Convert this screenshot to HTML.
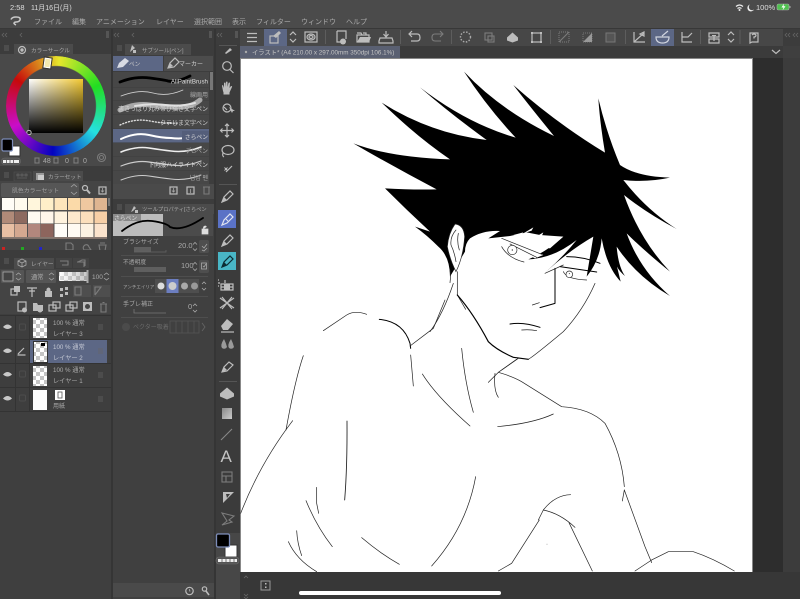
<!DOCTYPE html>
<html><head><meta charset="utf-8"><style>
html,body{margin:0;padding:0;width:800px;height:599px;overflow:hidden;background:#3f3f3f}
svg{position:absolute;left:0;top:0}
#ring{position:absolute;left:6px;top:56px;width:100px;height:100px;border-radius:50%;background:conic-gradient(from -56deg,#f00,#ff0,#0f0,#0ff,#00f,#f0f,#f00);-webkit-mask:radial-gradient(circle,transparent 39.5px,#000 40.5px);mask:radial-gradient(circle,transparent 39.5px,#000 40.5px);filter:saturate(.8) brightness(.92)}
#mk{position:absolute;left:44px;top:58px;width:5px;height:8px;background:#f3e9b0;border:1px solid #fff;outline:1px solid #333;transform:rotate(8deg)}
text{font-family:"Liberation Sans","Noto Sans CJK JP",sans-serif;fill:#aaa;font-size:6px}
.i{fill:none;stroke:#bdbdbd;stroke-width:1.2}
.a{fill:none;stroke:#a8a8a8;stroke-width:.8}
.d{fill:none;stroke:#7c7c7c;stroke-width:1.1}
.f{fill:#bdbdbd}
.l{fill:none;stroke:#000;stroke-width:3;stroke-linecap:round;stroke-linejoin:round}
.t{fill:none;stroke:#222;stroke-width:2.1;stroke-linecap:round;stroke-linejoin:round}
.b{fill:none;stroke-linecap:round}
</style></head><body>
<svg width="800" height="599" viewBox="0 0 800 599" xmlns="http://www.w3.org/2000/svg">
<defs>
<linearGradient id="sx" x1="0" x2="1" y1="0" y2="0"><stop offset="0" stop-color="#fff"/><stop offset="1" stop-color="#f2c832"/></linearGradient>
<linearGradient id="sy" x1="0" x2="0" y1="0" y2="1"><stop offset="0" stop-color="#000" stop-opacity="0"/><stop offset="1" stop-color="#000"/></linearGradient>
<linearGradient id="gr" x1="0" x2="1" y1="0" y2="1"><stop offset="0" stop-color="#888"/><stop offset="1" stop-color="#ccc"/></linearGradient>
<pattern id="ck" width="8" height="8" patternUnits="userSpaceOnUse"><rect width="8" height="8" fill="#fff"/><rect width="4" height="4" fill="#c4c4c4"/><rect x="4" y="4" width="4" height="4" fill="#c4c4c4"/></pattern>
<linearGradient id="op" x1="0" x2="1" y1="0" y2="0"><stop offset="0" stop-color="#fff"/><stop offset="1" stop-color="#777"/></linearGradient>
</defs>

<!-- base -->
<rect width="800" height="599" fill="#3f3f3f"/>
<rect width="800" height="28" fill="#4b4b4b"/>
<rect y="28" width="800" height="1" fill="#383838"/>

<!-- status -->
<text x="10" y="10" style="font-size:7.5px;fill:#ddd">2:58</text>
<text x="31" y="10" style="font-size:7px;fill:#ddd">11月16日(月)</text>
<path d="M736 6.500q3.500-3 7 0M737.500 8.500q2-1.500 4 0" fill="none" stroke="#eee" stroke-width="1.200"/><circle cx="739.500" cy="10" r="1" fill="#eee"/>
<path d="M750 4.500a3.500 3.500 0 1 0 4 5a3.200 3.200 0 0 1-4-5z" fill="#eee"/>
<text x="756" y="10" style="font-size:7.500px;fill:#ddd">100%</text>
<rect x="777" y="4" width="12" height="6" rx="1.500" fill="#4fc24f" stroke="#aaa" stroke-width=".6"/><rect x="789.500" y="6" width="1" height="2" fill="#aaa"/><path d="M784 3.500l-2.500 4h2l-1 3l3-4.200h-2z" fill="#fff"/>

<!-- menu -->
<path d="M11 19.500q1-2.500 5-2.500q5 0 4 3q-1 2-4 2q-2 0-2 1.500q1 1 2 1.500" fill="none" stroke="#c8c8c8" stroke-width="1.500"/>
<text x="34" y="24" style="font-size:7px">ファイル</text><text x="72" y="24" style="font-size:7px">編集</text><text x="96" y="24" style="font-size:7px">アニメーション</text><text x="156" y="24" style="font-size:7px">レイヤー</text><text x="194" y="24" style="font-size:7px">選択範囲</text><text x="232" y="24" style="font-size:7px">表示</text><text x="256" y="24" style="font-size:7px">フィルター</text><text x="301" y="24" style="font-size:7px">ウィンドウ</text><text x="346" y="24" style="font-size:7px">ヘルプ</text>

<!-- panel separators & strips -->
<rect x="0" y="29" width="240" height="15" fill="#3c3c3c"/>
<rect x="111" y="29" width="2" height="570" fill="#353535"/>
<rect x="214" y="29" width="2" height="570" fill="#353535"/>
<rect x="106" y="31" width="3" height="7" fill="#555"/><rect x="209" y="31" width="3" height="7" fill="#555"/><rect x="235" y="31" width="3" height="7" fill="#555"/>
<path d="M4 33l-2 2 2 2M7 33l-2 2 2 2M22 33l-2 2 2 2M116 33l-2 2 2 2M119 33l-2 2 2 2M134 33l-2 2 2 2M219 33l-2 2 2 2M222 33l-2 2 2 2" fill="none" stroke="#666" stroke-width=".8"/>

<!-- toolbar -->
<rect x="240" y="29" width="543" height="17" fill="#474747"/>
<rect x="783" y="29" width="17" height="17" fill="#3c3c3c"/>
<path d="M787 33l-2 2 2 2M790 33l-2 2 2 2M795 33l-2 2 2 2M798 33l-2 2 2 2" fill="none" stroke="#666" stroke-width=".8"/>
<rect x="264" y="29" width="23" height="17" fill="#5c6785"/>
<rect x="651" y="29" width="23" height="17" fill="#5c6785"/>
<path d="M325.500 30v14M400.500 30v14M451.500 30v14M550.500 30v14M625.500 30v14M700.500 30v14M740 30v14" stroke="#5d5d5d" stroke-width="1"/>
<path d="M247 33.500h10M247 37.500h10M247 41.500h10" class="i"/>
<rect x="270" y="36" width="8" height="7" class="i"/><path d="M273 36l6-5 2 2-5 5z" class="f"/>
<path d="M290 35l3-3 3 3M290 39l3 3 3-3" class="i"/>
<rect x="305" y="32" width="12" height="10" class="i"/><ellipse cx="311" cy="37" rx="4" ry="3" class="i"/><ellipse cx="311" cy="37" rx="2" ry="1.500" class="i"/>
<path d="M337 31h9v8M337 31v11h4" class="i"/><circle cx="343" cy="41.500" r="3" class="f"/>
<path d="M357 35h12v7h-12zM357 33h4l1 2M363 33h3v2" class="i"/><path d="M357 42l3-5h11l-2 5z" class="f"/>
<path d="M386 31v6M383.500 34l2.500 3 2.500-3M380 38h12l1 3v2h-14v-2z" class="i"/>
<path d="M409 34h8q3 0 3 3.500t-3 3.500h-6M412 31l-3 3 3 3" class="i"/>
<path d="M443 34h-8q-3 0-3 3.500t3 3.500h6M440 31l3 3-3 3" class="d"/>
<circle cx="465.500" cy="37" r="5" fill="none" stroke="#aaa" stroke-width="1.400" stroke-dasharray="1.500 1.500"/>
<rect x="485" y="33" width="7" height="7" class="d"/><rect x="488" y="36" width="6" height="6" class="d"/>
<path d="M507 37.500l5.500-5 5.500 5v3l-5.500 2-5.500-2z" class="f"/>
<rect x="532" y="33" width="9" height="9" class="i"/><path d="M531 32h2v2h-2zM540 32h2v2h-2zM531 41h2v2h-2zM540 41h2v2h-2z" class="f"/>
<rect x="559" y="32" width="10" height="10" fill="none" stroke="#7c7c7c" stroke-dasharray="1 1"/><path d="M559 42l10-10" class="d"/>
<rect x="583" y="33" width="9" height="9" fill="none" stroke="#777" stroke-dasharray="1 1"/><path d="M583 42l9-9v9z" fill="#999"/>
<rect x="606" y="33" width="9" height="9" fill="#555" stroke="#777"/>
<path d="M634 32v10h11M634 42l10-9M640 34l4-2v4z" class="i"/>
<path d="M656 37h13q0 6-6.500 6t-6.500-6zM662 36l6-5" fill="none" stroke="#d0d4de" stroke-width="1.200"/>
<path d="M682 32v10h10M682 37h6l4-4" class="i"/>
<path d="M709 33h10v4h-10zM709 39h10v4h-10zM714 35v6" class="i"/><path d="M712 35h4v1h-4z" class="f"/>
<path d="M728 35l3-3 3 3M728 39l3 3 3-3" class="i"/>
<path d="M750 33h8v9h-6l-2 1zM752 35q2-2 4 0q0 2-2 2v1.500" class="i"/>

<!-- canvas tab strip -->
<rect x="240" y="46" width="543" height="12" fill="#3b3b3b"/>
<rect x="240" y="46" width="160" height="12" fill="#5a6072"/>
<circle cx="246" cy="52" r="1.200" fill="#aaa"/>
<text x="252" y="54.500" style="font-size:6.300px;fill:#c4c4c4">イラスト* (A4 210.00 x 297.00mm 350dpi 106.1%)</text>
<path d="M772 50l4 3.500 4-3.500" class="i"/>

<!-- canvas area -->
<rect x="240" y="58" width="543" height="514" fill="#2d2d2d"/>
<rect x="783" y="58" width="17" height="514" fill="#3c3c3c"/>
<rect x="240" y="58" width="513" height="514" fill="#888"/>
<rect x="241" y="59" width="511" height="513" fill="#fff"/>
<rect x="240" y="572" width="560" height="27" fill="#373737"/>

<!-- HAIR -->
<g transform="translate(350 70) scale(.33333)">
<path d="M10 220Q120 262 300 268Q200 200 95 98Q240 190 410 210Q300 130 210 52Q350 160 497 203Q410 110 342 5Q450 120 612 198Q540 110 490 45Q620 160 765 248Q750 160 745 85Q770 190 810 285Q860 320 960 323Q890 338 820 330Q890 420 980 477Q890 430 822 375Q870 510 960 605Q880 540 830 490Q870 600 960 678Q860 620 800 530Q805 590 825 618Q790 590 790 545L812 635Q770 590 755 505Q750 570 710 620Q720 560 730 500Q660 540 585 608Q640 560 680 510Q610 565 535 568Q590 545 640 500L570 495L530 487L480 498L415 505L450 483Q400 480 360 505Q345 520 345 545L300 620Q300 560 265 530Q230 495 195 470L240 485Q170 420 105 355Q190 360 260 358Q130 290 10 220Z" fill="#000"/>
<path d="M520 490l30-18-5 10zM490 495l30-8-8 10zM550 505l30-18-6 14zM575 530l65-30-40 35zM500 520l30-12-10 12z" fill="#fff"/>
<path d="M455 505L580 555L555 565L470 525Z" fill="#fff"/>
<path d="M455 505l120 48M480 522l80 40" class="t"/>
<path d="M315 462Q295 490 292 530Q300 570 318 605Q340 560 344 500Q342 465 315 462Z" fill="#fff" stroke="#222" stroke-width="2"/>
<path d="M318 480q-18 20-15 45q10 20 15 50M325 490q-5 25 3 50" class="t"/>
<path d="M300 600q3 15 0 38M322 605l0 70l25 43" class="t"/>
</g>

<!-- FACE -->
<g transform="translate(430 200) scale(.33333)">
<path d="M82 285Q130 340 175 425Q200 450 250 472L295 478" class="l" style="stroke-width:3.500"/>
<path d="M295 478Q310 470 400 395Q460 330 495 250" class="t"/>
<path d="M70 250Q40 340 0 395" class="t"/>
<path d="M375 205L375 310L330 323" class="l"/><path d="M307 315L328 308" class="t"/>
<path d="M240 372Q280 365 330 382" class="l"/><path d="M275 390Q300 388 320 392" class="t"/>
<circle cx="247" cy="150" r="14" fill="#fff" stroke="#222" stroke-width="2"/><circle cx="247" cy="150" r="2" fill="#222"/>
<path d="M215 140Q235 175 282 186" class="t"/>
<path d="M400 215Q410 238 470 240" class="t"/><circle cx="418" cy="223" r="10" fill="#fff" stroke="#222" stroke-width="2"/><circle cx="418" cy="221" r="1.500" fill="#222"/>
<path d="M390 200L500 216" class="l"/>
<path d="M410 170Q460 170 510 190" class="l"/>
<path d="M345 220L400 195" class="t"/>
<path d="M215 510L265 475" class="t"/>
</g>

<!-- BODY -->
<g transform="translate(240 300) scale(.33333)">
<path d="M250 92L320 45Q345 30 380 43" class="t"/>
<path d="M418 58Q490 65 510 130L512 145" class="l"/>
<path d="M510 138L580 85L615 0" class="t"/>
<path d="M512 165L520 258" class="t"/>
<path d="M547 222Q590 290 690 378" class="t"/>
<path d="M665 145Q675 250 700 337" class="t"/>
<path d="M190 167Q165 240 138 390" class="t"/>
<path d="M158 362Q60 490 2 640" class="t"/>
<path d="M321 363Q322 500 314 600" class="t" style="stroke-width:2.600"/>
<path d="M230 562L230 610L236 640" class="t"/>
<path d="M198 602Q230 680 277 740" class="t"/>
<path d="M170 692Q172 730 185 767" class="t"/>
<path d="M145 725Q170 780 230 815" class="t"/>
<path d="M365 713Q420 760 478 793" class="t"/>
<path d="M707 530Q680 680 575 798" class="t"/>
</g>
<g transform="translate(480 340) scale(.33333)">
<path d="M110 58L55 97L25 127" class="t"/>
<path d="M45 100Q40 150 55 172" class="t"/>
<path d="M55 97Q100 110 125 125L245 200Q330 205 375 250Q425 340 433 440" class="t"/>
<path d="M433 450L427 483" class="t"/>
<path d="M433 450L495 620L515 668" class="t"/>
<path d="M515 660L465 693" class="t"/>
<path d="M515 660L565 635L640 635Q700 655 763 693" class="t"/>
<path d="M53 260Q160 250 220 222" class="t"/>
<path d="M272 464Q225 465 190 510L175 540" class="t"/>
<path d="M178 540L95 670L55 693" class="t"/>
<path d="M190 510Q240 520 285 562" class="t"/>
<path d="M267 548L337 693" class="t"/>
<circle cx="201" cy="613" r="2" fill="#ccc"/>
</g>

<!-- bottom -->
<path d="M244 578l2-2 2 2M244 594l2 2 2-2M244 597l2 2 2-2" fill="none" stroke="#666" stroke-width=".8"/>
<rect x="261" y="581" width="9" height="9" fill="none" stroke="#999"/><path d="M265 583h1.500v1.500h-1.500zM265 586.500h1.500v1.500h-1.500z" class="f"/>
<rect x="299" y="591" width="202" height="4" rx="2" fill="#fff"/>

<!-- LEFT PANEL: colour circle -->
<rect x="0" y="44" width="111" height="122" fill="#494949"/>
<rect x="0" y="44" width="14" height="10" fill="#3c3c3c"/>
<rect x="14" y="44" width="59" height="10" fill="#4b4b4b"/>
<rect x="73" y="44" width="38" height="10" fill="#3c3c3c"/>
<path d="M4 46h5M4 48h5M4 50h5" stroke="#6a6a6a" stroke-width=".8"/>
<circle cx="22" cy="50" r="3.500" class="i"/><circle cx="22" cy="50" r="1.700" class="f"/>
<text x="31" y="52.500" style="font-size:5.600px">カラーサークル</text>
<rect x="29" y="79" width="54" height="54" fill="url(#sx)"/><rect x="29" y="79" width="54" height="54" fill="url(#sy)"/>
<circle cx="29" cy="132.500" r="2.200" fill="#222" stroke="#ddd" stroke-width=".8"/>
<rect x="9" y="146" width="11" height="10" fill="#fff" stroke="#333"/>
<rect x="2" y="139" width="10.500" height="12" rx="1.500" fill="#000" stroke="#7c8cb8" stroke-width="1.200"/>
<rect x="1.500" y="158" width="19" height="6.500" rx="3" fill="#555" stroke="#6a6a6a" stroke-width=".6"/><rect x="3" y="160" width="16" height="3" fill="#eee"/><path d="M6.500 160v3M10 160v3M13.500 160v3" stroke="#777"/>
<rect x="35" y="158" width="4" height="5" class="d"/><text x="43" y="163" style="font-size:7px">48</text>
<rect x="54" y="158" width="4" height="5" class="d"/><text x="65" y="163" style="font-size:7px">0</text>
<rect x="74" y="158" width="4" height="5" class="d"/><text x="83" y="163" style="font-size:7px">0</text>
<circle cx="101.500" cy="157.500" r="4" class="d"/><circle cx="101.500" cy="157.500" r="2" class="d"/>

<!-- colour set -->
<rect x="0" y="166" width="111" height="15" fill="#3c3c3c"/>
<rect x="14" y="172" width="17" height="9" fill="#3f3f3f" stroke="#555" stroke-width=".5"/>
<rect x="33" y="171" width="50" height="10" fill="#4b4b4b"/>
<path d="M4 173h5M4 175h5M4 177h5" stroke="#6a6a6a" stroke-width=".8"/>
<path d="M17 174h2v2h-2zM21 174h2v2h-2zM25 174h2v2h-2zM17 178h10" stroke="#777" stroke-width=".6" fill="none"/>
<rect x="36" y="173" width="8" height="7" fill="#9a9a9a"/><rect x="38" y="175" width="6" height="5" fill="#ccc"/>
<text x="48" y="179" style="font-size:5.600px">カラーセット</text>
<rect x="0" y="181" width="111" height="69" fill="#454545"/>
<rect x="1" y="183" width="78" height="14" rx="1.500" fill="#565656"/>
<text x="12" y="192.500" style="font-size:5.900px;fill:#a0a0a0">肌色カラーセット</text>
<path d="M71 187l3-2.500 3 2.500M71 192l3 2.500 3-2.500" class="a"/>
<circle cx="85" cy="188" r="2.500" class="i"/><path d="M87 190l3 3.500" stroke="#bdbdbd" stroke-width="2"/>
<rect x="99" y="187" width="7" height="7" class="i"/><path d="M102.500 188v4M101 190.500l1.500 1.500 1.500-1.500" class="a"/>
<g shape-rendering="crispEdges">
<rect x="2" y="198" width="105" height="40" fill="#505050"/>
<rect x="2" y="198" width="12" height="12" fill="#fffdf6"/><rect x="14.500" y="198" width="12.500" height="12" fill="#fffbee"/><rect x="28" y="198" width="12.500" height="12" fill="#fff6dc"/><rect x="41" y="198" width="12.500" height="12" fill="#feefc9"/><rect x="54.500" y="198" width="12.500" height="12" fill="#fde5bb"/><rect x="68" y="198" width="12.500" height="12" fill="#fbdaa9"/><rect x="81" y="198" width="12.500" height="12" fill="#efc8a0"/><rect x="94.500" y="198" width="12.500" height="12" fill="#dfb591"/>
<rect x="2" y="211.500" width="12" height="12" fill="#b08a78"/><rect x="14.500" y="211.500" width="12.500" height="12" fill="#8d6a5f"/><rect x="28" y="211.500" width="12.500" height="12" fill="#fffaf0"/><rect x="41" y="211.500" width="12.500" height="12" fill="#fff6ea"/><rect x="54.500" y="211.500" width="12.500" height="12" fill="#fff3de"/><rect x="68" y="211.500" width="12.500" height="12" fill="#fde8cc"/><rect x="81" y="211.500" width="12.500" height="12" fill="#fbdfbc"/><rect x="94.500" y="211.500" width="12.500" height="12" fill="#f7cfa6"/>
<rect x="2" y="224" width="12" height="13" fill="#e8bfa3"/><rect x="14.500" y="224" width="12.500" height="13" fill="#d4a890"/><rect x="28" y="224" width="12.500" height="13" fill="#b2877d"/><rect x="41" y="224" width="12.500" height="13" fill="#8d655d"/><rect x="54.500" y="224" width="12.500" height="13" fill="#fffdf8"/><rect x="68" y="224" width="12.500" height="13" fill="#fffaf2"/><rect x="81" y="224" width="12.500" height="13" fill="#fcf2e2"/><rect x="94.500" y="224" width="12.500" height="13" fill="#fbe3cc"/>
<rect x="2" y="237.500" width="105" height="1" fill="#bda08f"/>
<rect x="108" y="198" width="2" height="8" fill="#777"/>
<rect x="2" y="247" width="3" height="3" fill="#c22"/><rect x="21" y="247" width="3" height="3" fill="#2a2"/><rect x="39" y="247" width="3" height="3" fill="#22c"/>
</g>
<path d="M66 243h5l2 2v5h-7zM84 250q-2-3 1-5q3-1 4 2l2 3zM100 243h5M99 245h7l-1 6h-5z" class="d"/>

<!-- layers -->
<rect x="0" y="250" width="111" height="19" fill="#3c3c3c"/>
<rect x="14" y="258" width="40" height="11" fill="#4b4b4b"/>
<path d="M4 259h5M4 261h5M4 263h5" stroke="#6a6a6a" stroke-width=".8"/>
<path d="M22 259l4 2v4l-4 2-4-2v-4zM18 261l4 2 4-2M22 263v4" class="a"/>
<text x="31" y="266" style="font-size:5.700px">レイヤー</text>
<rect x="56" y="258" width="16" height="10" fill="#434343"/><rect x="73" y="258" width="16" height="10" fill="#434343"/>
<path d="M60 261h8v4h-6M77 262h7v5M78 262l4-2h3v6" class="d"/>
<rect x="0" y="269" width="111" height="45" fill="#444"/>
<rect x="1" y="270" width="23" height="13" rx="1" fill="#555"/><rect x="3" y="272" width="10" height="9" fill="#444" stroke="#aaa" stroke-width=".8"/><path d="M16 275l2.500-2 2.500 2M16 278l2.500 2 2.500-2" class="a"/>
<rect x="26" y="270" width="30" height="13" rx="1" fill="#555"/><text x="31" y="279" style="font-size:6.300px">通常</text><path d="M49 275l2.500-2 2.500 2M49 278l2.500 2 2.500-2" class="a"/>
<rect x="59" y="272" width="28" height="9" fill="url(#ck)"/><rect x="59" y="272" width="28" height="9" fill="url(#op)" opacity=".4"/>
<rect x="86.500" y="270" width="2" height="13" fill="#aaa"/>
<text x="92" y="279" style="font-size:6.500px">100</text>
<path d="M104 275l2.500-2 2.500 2M104 278l2.500 2 2.500-2" class="a"/>
<rect x="11" y="289" width="6" height="6" class="i"/><rect x="14" y="286" width="6" height="6" class="f"/>
<path d="M27 288h10M29 291h6M32 288v9" class="i"/>
<path d="M45 291h7v6h-7zM46.500 291v-2q2-3 4 0v2" class="f"/>
<path d="M60 288h3v3h-3zM65 292h3v3h-3zM60 294h3v3h-3zM65 287h3v3h-3z" class="f"/>
<rect x="73" y="285" width="18" height="12" fill="#4e4e4e"/><rect x="75" y="287" width="6" height="8" class="d"/>
<rect x="93" y="285" width="17" height="12" fill="#4e4e4e"/><path d="M95 295v-8h6l-6 8" class="d"/>
<rect x="18" y="302" width="8" height="9" class="i"/><circle cx="24.500" cy="310" r="2.500" class="f"/>
<path d="M33 303h4l1 2h5v6h-10z" class="f"/><circle cx="40" cy="310" r="2.500" class="f"/>
<rect x="49" y="305" width="7" height="6" class="i"/><rect x="53" y="302" width="7" height="6" class="i"/>
<rect x="66" y="305" width="7" height="6" class="i"/><rect x="70" y="302" width="7" height="6" class="i"/>
<rect x="83" y="302" width="9" height="9" class="f"/><circle cx="87.500" cy="306.500" r="2.500" fill="#444"/>
<path d="M100 304h7M101 304v8h5v-8M102.500 302.500h2" class="d"/>
<!-- layer rows -->
<rect x="0" y="314" width="111" height="98" fill="#3e3e3e"/>
<rect x="30" y="340" width="77" height="24" fill="#5c6785"/>
<path d="M0 315.500h111M0 339.500h111M0 363.500h111M0 387.500h111M0 411.500h111" stroke="#333" stroke-width="1"/>
<path d="M15.500 315v97M29.500 315v97" stroke="#333"/>
<g fill="#c8c8c8">
<path d="M3 327q4.500-5 9 0q-4.500 4-9 0z"/><path d="M3 351q4.500-5 9 0q-4.500 4-9 0z"/><path d="M3 374.500q4.500-5 9 0q-4.500 4-9 0z"/><path d="M3 398.500q4.500-5 9 0q-4.500 4-9 0z"/>
</g>
<rect x="19.500" y="324" width="6" height="6" rx="1" fill="none" stroke="#4c4c4c"/><rect x="19.500" y="371" width="6" height="6" rx="1" fill="none" stroke="#4c4c4c"/><rect x="19.500" y="395" width="6" height="6" rx="1" fill="none" stroke="#4c4c4c"/>
<path d="M17.500 355h8M18 354l6-6" class="i"/>
<rect x="33" y="318" width="14" height="20" fill="url(#ck)"/>
<rect x="33" y="341" width="15" height="22" fill="#333"/><rect x="34" y="342" width="13" height="20" fill="url(#ck)"/><rect x="41" y="343" width="4" height="3" fill="#000"/>
<rect x="33" y="366" width="14" height="20" fill="url(#ck)"/>
<rect x="33" y="390" width="14" height="20" fill="#fff"/>
<text x="53" y="325" style="font-size:6.200px">100 % 通常</text><text x="53" y="336" style="font-size:6.200px">レイヤー 3</text>
<text x="53" y="349" style="font-size:6.200px;fill:#c4c8d4">100 % 通常</text><text x="53" y="360" style="font-size:6.200px;fill:#c4c8d4">レイヤー 2</text>
<text x="53" y="372" style="font-size:6.200px">100 % 通常</text><text x="53" y="383" style="font-size:6.200px">レイヤー 1</text>
<rect x="55" y="390" width="10" height="10" fill="#fff"/><rect x="58" y="392" width="4" height="6" fill="none" stroke="#555" stroke-width=".8"/>
<text x="53" y="408" style="font-size:6px">用紙</text>
<path d="M98 325h5M98 327h5M98 329h5M98 349h5M98 351h5M98 353h5M98 373h5M98 375h5M98 377h5M98 397h5M98 399h5M98 401h5" stroke="#666" stroke-width=".8"/>

<!-- SUBTOOL -->
<rect x="113" y="44" width="101" height="11" fill="#3c3c3c"/>
<rect x="125" y="44" width="66" height="11" fill="#4b4b4b"/>
<path d="M117 46h5M117 48h5M117 50h5" stroke="#6a6a6a" stroke-width=".8"/>
<path d="M130 52l2-7 3 3zM133 50h3v3h-3z" class="f"/>
<text x="142" y="52.500" style="font-size:5.500px">サブツール[ペン]</text>
<rect x="113" y="55" width="101" height="129" fill="#3d3d3d"/>
<rect x="113" y="56" width="50" height="15" fill="#5c6785"/><rect x="164" y="56" width="49" height="15" fill="#4c4c4c"/>
<path d="M117 68l2-5 6-5 4 3-6 6z" fill="#d8dbe4"/>
<text x="129" y="66" style="font-size:5.600px;fill:#ccc">ペン</text>
<path d="M168 68l2-5 5-5 4 4-5 5z" class="i"/><path d="M168 68l2-5 3 3z" class="f"/>
<text x="179" y="66" style="font-size:6px;fill:#ccc">マーカー</text>
<rect x="113" y="72" width="96" height="15" fill="#474747"/>
<rect x="113" y="87.500" width="96" height="13" fill="#474747"/>
<rect x="113" y="101" width="96" height="13.500" fill="#474747"/>
<rect x="113" y="115" width="96" height="13.500" fill="#474747"/>
<rect x="113" y="129" width="96" height="13.500" fill="#5c6785"/>
<rect x="113" y="143" width="96" height="13.500" fill="#474747"/>
<rect x="113" y="157" width="96" height="13.500" fill="#474747"/>
<rect x="113" y="171" width="96" height="13" fill="#474747"/>
<rect x="210" y="72" width="3" height="18" fill="#777"/>
<path d="M120 82q15-6 30-4t18 3q8 2 22-5" class="b" stroke="#000" stroke-width="2.800"/>
<text x="208" y="83.500" text-anchor="end" style="font-size:6.200px;fill:#ddd">AllPaintBrush</text>
<text x="208" y="97" text-anchor="end" style="font-size:6px">線画用</text>
<path d="M121 96q18-7 32-3t30-3" class="b" stroke="#d0d0d0" stroke-width=".8"/>
<path d="M120 110q15-7 30-5t30 2q12 0 20-7" class="b" stroke="#a8a8a8" stroke-width="5"/>
<path d="M135 106q15-3 30-1t30-2" class="b" stroke="#e0e0e0" stroke-width="2"/>
<text x="208" y="111" text-anchor="end" style="font-size:6px;fill:#d0d0d0">書きっぱり丸み帯び描き文字ペン</text>
<path d="M120 125q15-7 30-4t28 2" class="b" stroke="#ddd" stroke-width="1.400" stroke-dasharray="1 2"/>
<text x="208" y="125" text-anchor="end" style="font-size:6px;fill:#ccc">タテじま文字ペン</text>
<path d="M121 139q15-7 28-4t22 3q15 2 30-4" class="b" stroke="#fff" stroke-width="2"/>
<rect x="182" y="131" width="27" height="11" fill="#545e7a"/>
<text x="208" y="139" text-anchor="end" style="font-size:5.800px;fill:#ddd">さらペン</text>
<path d="M121 152q15-6 28-4t22 3q15 2 30-4" class="b" stroke="#eee" stroke-width="1.600"/>
<text x="208" y="153" text-anchor="end" style="font-size:6px">デGペン</text>
<path d="M121 166q15-6 28-4t22 3q15 2 30-4" class="b" stroke="#ccc" stroke-width="1.200"/>
<text x="208" y="167" text-anchor="end" style="font-size:6px;fill:#ddd">下向服ハイライトペン</text>
<path d="M121 180q15-6 28-4t22 3q15 2 30-4" class="b" stroke="#ccc" stroke-width="1"/>
<text x="208" y="180" text-anchor="end" style="font-size:6px">넘넘 펜</text>
<rect x="113" y="184" width="101" height="15" fill="#4a4a4a"/>
<rect x="170" y="187" width="7" height="7" class="i"/><path d="M173.500 188v4M172 190.500l1.500 1.500 1.500-1.500" class="a"/>
<rect x="187" y="187" width="7" height="7" class="i"/><path d="M190.500 189v4" class="a"/>
<path d="M203 187h7M204 187v7h5v-7" class="d"/>

<!-- TOOL PROPERTY -->
<rect x="113" y="199" width="101" height="15" fill="#3c3c3c"/>
<rect x="125" y="204" width="89" height="10" fill="#4b4b4b"/>
<path d="M117 205h5M117 207h5M117 209h5" stroke="#6a6a6a" stroke-width=".8"/>
<path d="M131 212l3-6 2 2-3 3zM135 210h3v3h-3z" class="f"/>
<text x="142" y="211" style="font-size:5.300px">ツールプロパティ[さらペン</text>
<rect x="113" y="214" width="101" height="385" fill="#404040"/>
<rect x="113" y="214" width="50" height="22" fill="#bcbcbc"/>
<rect x="163" y="214" width="50" height="22" fill="#4b4b4b"/>
<rect x="113" y="214" width="28" height="7" fill="#8a8a8a"/>
<text x="114" y="220" style="font-size:5.800px;fill:#ddd">さらペン</text>
<path d="M122 231q15-12 30-10t18 6q12 5 33-9" class="b" stroke="#000" stroke-width="1.800"/>
<path d="M202 229h6v5h-6zM203.500 229v-2q2-2 3 0" fill="#ddd" stroke="#ddd" stroke-width=".7"/>
<text x="123" y="244" style="font-size:6px">ブラシサイズ</text>
<rect x="134" y="247" width="17" height="5" fill="#5f5f5f"/>
<path d="M134 252h32v-2" stroke="#666" fill="none" stroke-width=".7"/>
<text x="178" y="248" style="font-size:7.500px">20.0</text>
<path d="M193 244.500l2-2 2 2M193 248.500l2 2 2-2" class="a"/>
<rect x="199" y="240" width="10" height="13" rx="2" fill="#4e4e4e"/><path d="M202 246l2 2 3-4M202 250l2 1 3-3" class="a"/>
<path d="M121 255.500h87" stroke="#4e4e4e"/>
<text x="123" y="264" style="font-size:5.800px">不透明度</text>
<rect x="134" y="267" width="32" height="5" fill="#5f5f5f"/>
<text x="181" y="268" style="font-size:7.500px">100</text>
<path d="M193 264.500l2-2 2 2M193 268.500l2 2 2-2" class="a"/>
<rect x="199" y="260" width="10" height="13" rx="2" fill="#4e4e4e"/><rect x="201.500" y="263" width="5" height="6" class="a"/><path d="M203 266l1 1 2-3" class="a"/>
<path d="M121 276.500h87" stroke="#4e4e4e"/>
<text x="123" y="288.500" style="font-size:4.500px">アンチエイリアス</text>
<rect x="155" y="279" width="44" height="14" fill="#4e4e4e"/>
<rect x="166.500" y="279" width="12" height="14" fill="#6c7ec0"/>
<circle cx="161" cy="286" r="3.500" fill="#ddd"/><circle cx="172.500" cy="286" r="4" fill="#ccc"/><circle cx="184.500" cy="286" r="3.500" fill="#aaa"/><circle cx="194.500" cy="286" r="3.500" fill="#999"/>
<path d="M202 284l2-2 2 2M202 288l2 2 2-2" class="a"/>
<path d="M121 296.500h87" stroke="#4e4e4e"/>
<text x="123" y="306" style="font-size:6px">手ブレ補正</text>
<path d="M134 309v4h32" stroke="#777" fill="none" stroke-width=".8"/>
<text x="188" y="309" style="font-size:7.500px">0</text>
<path d="M193 306l2-2 2 2M193 310l2 2 2-2" class="a"/>
<path d="M121 317.500h87" stroke="#4e4e4e"/>
<circle cx="126" cy="327" r="4" fill="#4b4b4b"/>
<text x="133" y="329" style="font-size:6px;fill:#6a6a6a">ベクター吸着</text>
<path d="M170 321h29v12h-29zM176 321v12M182 321v12M188 321v12M194 321v12" fill="none" stroke="#555" stroke-width=".8"/>
<path d="M202 323l3 4-3 4" fill="none" stroke="#666" stroke-width=".8"/>
<rect x="113" y="583" width="101" height="14" fill="#4a4a4a"/>
<circle cx="189.500" cy="591" r="3.700" class="i"/><path d="M189.500 589v2h1" class="a"/>
<circle cx="204.500" cy="589" r="2.200" class="i"/><path d="M206 591l3 4" stroke="#bdbdbd" stroke-width="1.600"/>

<!-- TOOLS -->
<rect x="216" y="44" width="24" height="489" fill="#3b3b3b"/>
<rect x="216" y="533" width="24" height="66" fill="#474747"/>
<path d="M232 50l-6 4-1-1 5-5z" class="f"/>
<path d="M219 45.500h18" stroke="#555"/>
<circle cx="227" cy="66" r="4.300" class="i"/><path d="M230 69.500l3.500 3.500" class="i"/>
<path d="M223 91l-1-5q0-1 1-1l1 3v-5q1-1 1.500 0l.5 4v-5q1-1 1.500 0v5l1-4q1-1 1.500 0l-.5 5l1.500-2q1.500 0 1 1l-2.500 5.500v2h-6v-2z" class="f"/>
<circle cx="227" cy="108" r="4" class="i"/><path d="M229 107l3 6 1-2 2 0z" class="f"/><path d="M224 107l3 3" class="i"/>
<path d="M227 124v13M220.500 130.500h13M225 126l2-2 2 2M225 135l2 2 2-2M222.500 128.500l-2 2 2 2M231.500 128.500l2 2-2 2" class="i"/>
<ellipse cx="228" cy="150" rx="6" ry="4.500" class="i"/><path d="M223 153q-1 3 1 4" class="i"/>
<path d="M226 172l6-6" class="i"/><path d="M224 167l2 1 2-1-1 2 1 2-2-1-2 1 1-2z" class="f"/>
<path d="M219 184.500h18" stroke="#555"/>
<path d="M222 202l2-5 6-6 3 3-6 6z" class="i"/><path d="M222 202l2-5 3 3z" class="f"/>
<rect x="218" y="210" width="18" height="18" fill="#5a72c6"/>
<path d="M222 225l2-5 6-6 3 3-6 6z" fill="none" stroke="#e0e4f0" stroke-width="1.200"/><path d="M226 219l2 2" stroke="#e0e4f0" stroke-width="1"/>
<path d="M222 246l2-5 6-6 3 3-6 6z" class="i"/><path d="M222 246l2-5 3 3z" class="f"/>
<rect x="218" y="252" width="18" height="18" fill="#49b6c6"/>
<path d="M222 267l2-5 6-6 3 3-6 6z" fill="none" stroke="#0c2c34" stroke-width="1.200"/><path d="M222 267l2-5 3 3z" fill="#0c2c34"/>
<path d="M225 280v3M221 284h12v3h-12zM221 287h12v3h-12z" class="i"/><path d="M224 284h6v6h-6z" class="f"/><path d="M218 280h1M218 283h2M218 286h1" class="i"/>
<path d="M220 298l7 5 7-5M220 308l7-5 7 5M222 297l5 6 5-6M222 309l5-6 5 6" class="i"/>
<path d="M221 326l6-7 6 5-5 6h-5zM221 326l6 4" class="f"/><path d="M221 332h13" class="i"/>
<path d="M224 339q-4 6-2 9q3 2 5-1q-1-4-3-8zM231 339q-4 6-2 9q3 2 5-1q-1-4-3-8z" fill="#9a9a9a"/>
<path d="M222 372l2-5 5-5 4 3-6 6z" class="i"/><path d="M222 372l2-5 3 3z" class="f"/>
<path d="M219 381.500h18" stroke="#555"/>
<path d="M220 393.500l7-6 7 6v3l-7 3-7-3z" class="f"/>
<rect x="222" y="408" width="10" height="11" fill="url(#gr)"/>
<path d="M221 440l11-11" stroke="#888" stroke-width="1.100"/>
<text x="220.500" y="462" style="font-size:17px;fill:#c4c4c4">A</text>
<rect x="222" y="472" width="10" height="10" class="d"/><path d="M222 476h10M226 476v6" class="d"/>
<path d="M223 503v-11h11zM226 494l1 4 3-4z" fill="#bdbdbd" fill-rule="evenodd"/>
<path d="M222 513l12 3-5 4 3 2-10 3 5-4z" class="d"/>
<rect x="225" y="545" width="12" height="12" fill="#fff" stroke="#333"/>
<rect x="216.500" y="534" width="13" height="13" rx="1.500" fill="#000" stroke="#7c8cb8" stroke-width="1.300"/>
<rect x="216" y="557" width="23" height="7" rx="3" fill="#555" stroke="#6a6a6a" stroke-width=".6"/><rect x="218" y="559" width="19" height="3" fill="#eee"/><path d="M222 559v3M226 559v3M230 559v3M234 559v3" stroke="#777"/>
</svg>
<div id="ring"></div><div id="mk"></div>
</body></html>
